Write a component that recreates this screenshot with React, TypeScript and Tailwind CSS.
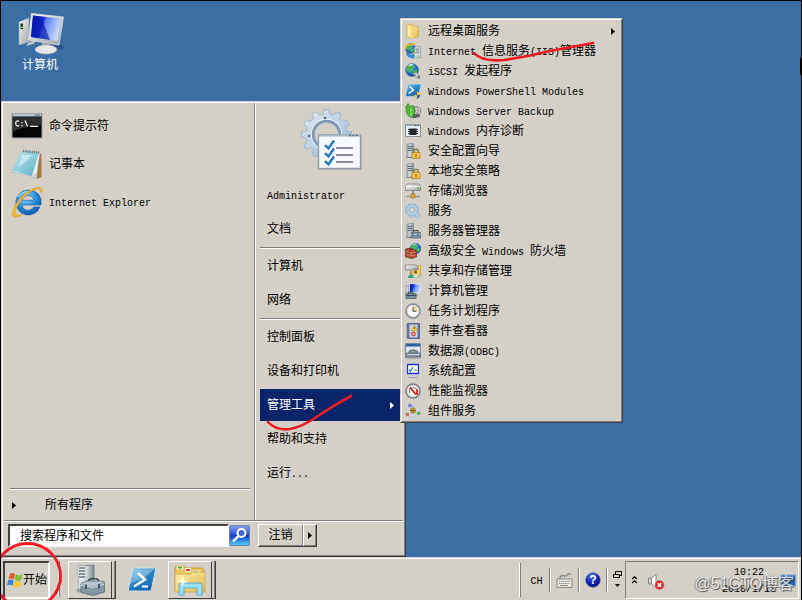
import React from "react";
import type { ReactNode } from "react";

const fontStack = "font-['Liberation_Mono','Noto_Sans_CJK_SC',monospace]";

/* Latin runs are set at half the width of a Han character. */
function Label({ text }: { text: string }) {
  const runs = text.split(/([\x20-\x7e]+)/).filter(Boolean);
  return (
    <span className="inline-block pt-0.5 leading-[14px] whitespace-pre">
      {runs.map((run, i) =>
        /^[\x20-\x7e]/.test(run) ? (
          <span key={i} className="text-[10px]">{run}</span>
        ) : (
          <span key={i}>{run}</span>
        )
      )}
    </span>
  );
}

function Svg({ box = 16, className = "size-4", children }: { box?: number; className?: string; children: ReactNode }) {
  return (
    <svg viewBox={`0 0 ${box} ${box}`} className={`shrink-0 ${className}`} aria-hidden="true">
      {children}
    </svg>
  );
}

function Arrow({ className = "" }: { className?: string }) {
  return (
    <svg viewBox="0 0 4 7" className={`h-[7px] w-1 shrink-0 ${className}`} aria-hidden="true">
      <path d="M0 0L4 3.5L0 7Z" fill="currentColor" />
    </svg>
  );
}

function Gradients() {
  return (
    <svg className="absolute size-0" aria-hidden="true">
      <defs>
        <linearGradient id="screen" x1="0" y1="0" x2="1" y2="0.3">
          <stop offset="0" stopColor="#0512a8" />
          <stop offset="0.45" stopColor="#1a35dc" />
          <stop offset="0.5" stopColor="#5c7df0" />
          <stop offset="1" stopColor="#c6d8fb" />
        </linearGradient>
        <linearGradient id="silver" x1="0" y1="0" x2="1" y2="1">
          <stop offset="0" stopColor="#fafafa" />
          <stop offset="1" stopColor="#9da3a8" />
        </linearGradient>
        <linearGradient id="gear" gradientUnits="userSpaceOnUse" x1="8" y1="6" x2="44" y2="52">
          <stop offset="0" stopColor="#dbe6ef" />
          <stop offset="0.5" stopColor="#bdd0e2" />
          <stop offset="1" stopColor="#8fabc8" />
        </linearGradient>
        <linearGradient id="steel" x1="0" y1="0" x2="1" y2="0">
          <stop offset="0" stopColor="#a9b4bb" />
          <stop offset="0.5" stopColor="#d5dbde" />
          <stop offset="1" stopColor="#7e8a92" />
        </linearGradient>
        <linearGradient id="folder" x1="0" y1="0" x2="1" y2="1">
          <stop offset="0" stopColor="#fdf3b0" />
          <stop offset="1" stopColor="#dfb94a" />
        </linearGradient>
        <linearGradient id="shell" x1="0" y1="0" x2="0.6" y2="1">
          <stop offset="0" stopColor="#8ec9ee" />
          <stop offset="0.5" stopColor="#2f87c8" />
          <stop offset="1" stopColor="#1566ad" />
        </linearGradient>
        <linearGradient id="note" x1="0" y1="0" x2="1" y2="1">
          <stop offset="0" stopColor="#c8eaf0" />
          <stop offset="1" stopColor="#57b0c4" />
        </linearGradient>
        <linearGradient id="search" x1="0" y1="0" x2="0" y2="1">
          <stop offset="0" stopColor="#8da0ef" />
          <stop offset="0.45" stopColor="#2c4fdc" />
          <stop offset="0.5" stopColor="#1237cf" />
          <stop offset="1" stopColor="#4dd5f4" />
        </linearGradient>
        <radialGradient id="globe" cx="0.35" cy="0.3" r="0.8">
          <stop offset="0" stopColor="#9be0ff" />
          <stop offset="0.5" stopColor="#2b7ed2" />
          <stop offset="1" stopColor="#0b3a8c" />
        </radialGradient>
        <radialGradient id="ie" cx="0.4" cy="0.3" r="0.8">
          <stop offset="0" stopColor="#8ad6fb" />
          <stop offset="0.55" stopColor="#2387d4" />
          <stop offset="1" stopColor="#0b4a9e" />
        </radialGradient>
        <radialGradient id="help" cx="0.4" cy="0.25" r="0.8">
          <stop offset="0" stopColor="#5d80f5" />
          <stop offset="0.5" stopColor="#1428c8" />
          <stop offset="1" stopColor="#040c6c" />
        </radialGradient>
      </defs>
    </svg>
  );
}

/* ---------- shared drawing parts ---------- */

function Tower() {
  return (
    <g>
      <path d="M2 1L8.5 0.5V14L2 14.5Z" fill="url(#steel)" stroke="#6d7880" strokeWidth=".6" />
      <path d="M3 3.5H7.5M3 5.5H7.5M3 7.5H7.5" stroke="#46525c" strokeWidth=".8" />
      <path d="M1 14.5H9" stroke="#7d8992" />
    </g>
  );
}

function SmallGlobe({ cx, cy, r }: { cx: number; cy: number; r: number }) {
  return (
    <g transform={`translate(${cx} ${cy}) scale(${r / 6})`}>
      <circle r="6" fill="url(#globe)" stroke="#174f94" strokeWidth=".6" />
      <path d="M-4.5 -3Q-2 -6 1 -5L2 -2L-1 0L-2 3L-4.5 1ZM1 1L5 -1L5 2L2 5L0 4Z" fill="#4db648" />
      <path d="M-3 -4Q-1 -5.5 1 -5" stroke="#d7f7ff" fill="none" />
    </g>
  );
}

function Toolbox() {
  return (
    <g>
      <path d="M9 9V7.5H13V9" fill="none" stroke="#3e4c57" strokeWidth="1" />
      <path d="M6 9.5H15.5V15H6Z" fill="#8298a9" stroke="#4d6170" strokeWidth=".7" />
      <path d="M6 11.5H15.5" stroke="#c8d3da" strokeWidth=".8" />
      <path d="M8 11V13M13 11V13" stroke="#39444d" />
    </g>
  );
}

function Drive() {
  return (
    <g>
      <path d="M2 1H14L15.5 3.5V7.5H0.5V3.5Z" fill="url(#silver)" stroke="#777" strokeWidth=".7" />
      <path d="M.5 3.8H15.5" stroke="#fff" strokeWidth=".7" />
      <path d="M12 5H14" stroke="#53b434" strokeWidth="1.6" />
    </g>
  );
}

/* One closed outline with flat-topped teeth and a round hole. */
function gearPath(cx: number, cy: number, outer: number, inner: number, hole: number, teeth: number) {
  const step = (Math.PI * 2) / teeth;
  const point = (radius: number, angle: number) =>
    `${(cx + radius * Math.sin(angle)).toFixed(2)} ${(cy - radius * Math.cos(angle)).toFixed(2)}`;
  const corners = Array.from({ length: teeth }, (_, i) => {
    const a = i * step;
    return [
      point(inner, a - step * 0.32),
      point(outer, a - step * 0.2),
      point(outer, a + step * 0.2),
      point(inner, a + step * 0.32),
    ].join("L");
  });
  return `M${corners.join("L")}ZM${cx - hole} ${cy}a${hole} ${hole} 0 1 0 ${hole * 2} 0a${hole} ${hole} 0 1 0 ${-hole * 2} 0Z`;
}

/* ---------- administrative tool icons ---------- */

const folderIcon = (
  <Svg>
    <path d="M1.5 2L6 1V14L1.5 15Z" fill="#f0d877" stroke="#c9a53c" strokeWidth=".5" />
    <path d="M6 1.5L8 1V3L13.5 3.5V14L6 14.5Z" fill="url(#folder)" stroke="#c9a53c" strokeWidth=".5" />
    <path d="M2 1L8.5 3.5V15.5L2 14Z" fill="#f5dd85" stroke="#d8b855" strokeWidth=".5" />
    <path d="M4 3.500V13" stroke="#fffbe0" />
  </Svg>
);
const iisIcon = (
  <Svg>
    <SmallGlobe cx={5.5} cy={5.5} r={5} />
    <path d="M.5 6Q1 1 5 1.500Q8 2 10 .5" fill="none" stroke="#f4b02f" strokeWidth="1.8" />
    <path d="M1.500 10Q2 15 7.500 14.500V16L10 13L7.500 10.500V12Q4 12.500 4 9.500Z" fill="#2f8fe0" stroke="#1b61ad" strokeWidth=".4" />
    <path d="M9.5 4L15.5 3.5V14.5L9.5 15Z" fill="#dce2e4" stroke="#7e8b90" strokeWidth=".6" />
    <path d="M10.5 6H14.5M10.5 8H14.5M10.5 10H14.5" stroke="#5d6c73" strokeWidth=".8" />
    <path d="M12 13H14" stroke="#41a83d" />
  </Svg>
);
const iscsiIcon = (
  <Svg>
    <SmallGlobe cx={7} cy={7} r={6.3} />
    <path d="M8.500 10.500L11 9L15 13L14.500 15.500L12 14.500Z" fill="#c4cbd1" stroke="#6b747c" strokeWidth=".7" />
    <circle cx="13.5" cy="14" r="1" fill="#5e666d" />
  </Svg>
);
const shellModulesIcon = (
  <Svg>
    <path d="M3 1H16L13.5 13.500H0.5Z" fill="url(#shell)" stroke="#b9dcf0" strokeWidth=".7" />
    <path d="M4.5 3.5L8.5 7L3.5 10.5" fill="none" stroke="#fff" strokeWidth="1.4" />
    <path d="M12 8.5Q13.5 10 15.5 9.5Q16 14 12 16Q8.5 14 8.8 9.5Q11 10 12 8.5Z" fill="#f2c531" />
    <path d="M12 8.5Q10.5 10 8.8 9.5L8.8 12H12ZM12 12H15.5Q14.5 15 12 16Z" fill="#2663c4" />
  </Svg>
);
const backupIcon = (
  <Svg>
    <circle cx="11.5" cy="8" r="4.200" fill="#c9cdcf" stroke="#737a7e" />
    <circle cx="11.8" cy="8" r="1.400" fill="#eee" stroke="#b06061" strokeWidth=".8" />
    <path d="M6 12L13 10.5L15 12V14L8 15.5Z" fill="#5b6367" />
    <path d="M.5 5L3 .5L6 4L4.500 4.500L5.500 10L7.500 2L9.500 4V11L6.500 14.500L3.500 13L1 8.500L2 5Z" fill="#49c12e" stroke="#247814" strokeWidth=".7" />
    <path d="M6 6V13" stroke="#d8f5c9" strokeWidth=".8" />
  </Svg>
);
const memoryIcon = (
  <Svg>
    <path d="M.5 1.500H15.5V13.5H.5Z" fill="#e9edf0" stroke="#8a949c" />
    <path d="M1 2.5H15" stroke="#a4b6c4" strokeWidth="1.4" />
    <path d="M10 2.5H14" stroke="#4e5c66" strokeDasharray="1 .6" />
    <path d="M4.500 5.500H11.500V12H4.500Z" fill="#22262a" />
    <path d="M3 6.500H13M3 8.500H13M3 10.500H13" stroke="#22262a" strokeWidth=".9" />
  </Svg>
);
const securityIcon = (
  <Svg>
    <Tower />
    <path d="M9 10V8Q9 6.3 11 6.3Q13 6.3 13 8V10" fill="none" stroke="#8f7b45" strokeWidth="1.4" />
    <path d="M7 9.5H15V15.5H7Z" fill="#edb83a" stroke="#a5741a" strokeWidth=".6" />
    <path d="M7.5 11H14.5M7.5 13H14.5" stroke="#ffdf80" strokeWidth=".7" />
    <path d="M11 11V14" stroke="#825710" />
  </Svg>
);
const storageIcon = (
  <Svg>
    <Drive />
    <path d="M8 8V12" stroke="#777" strokeWidth="1.4" />
    <path d="M1 13.5H15" stroke="#8d9499" strokeWidth="1.3" />
    <path d="M6 11H10V15H6Z" fill="#e2a92b" stroke="#9a6f14" strokeWidth=".6" />
  </Svg>
);
const servicesIcon = (
  <Svg>
    <path d={gearPath(7, 7, 6.8, 5.3, 2.8, 12)} fill="#b3d0e6" stroke="#7ba1c2" strokeWidth=".6" fillRule="evenodd" />
    <path d={gearPath(12.7, 12.7, 3, 2.1, 0.9, 8)} fill="#d3e1ec" stroke="#86a3b7" strokeWidth=".5" fillRule="evenodd" />
  </Svg>
);
const serverManagerIcon = (
  <Svg>
    <Tower />
    <Toolbox />
  </Svg>
);
const firewallIcon = (
  <Svg>
    <SmallGlobe cx={10.5} cy={5.5} r={5.2} />
    <path d="M.5 6L5 5L11.5 7.5V14L7 15.5L.5 14Z" fill="#a33a22" stroke="#652113" strokeWidth=".6" />
    <path d="M.5 8.5L7 10L11.5 9M.5 11L7 12.7L11.5 11.5M3 6V9M5.5 9.5V12M3 11.8V14.5M9 7V9.5M9.5 11.8V14.5M7 7V15" stroke="#e2a18b" strokeWidth=".6" fill="none" />
  </Svg>
);
const sharingIcon = (
  <Svg>
    <path d="M6 2.500H15.5V13H6Z" fill="#f1d06c" stroke="#bb922f" strokeWidth=".6" />
    <path d="M.5 2H11L13 4V7H.5Z" fill="url(#silver)" stroke="#777" strokeWidth=".7" />
    <path d="M10 5.500H12" stroke="#45a933" />
    <circle cx="6" cy="9.500" r="1.600" fill="#cf9062" />
    <circle cx="10.5" cy="9" r="1.600" fill="#8c5a3a" />
    <path d="M3 15Q3.5 11.200 6 11.200Q8 11.200 8.5 15Z" fill="#37a18a" />
    <path d="M8.5 14.5Q9 10.800 11 10.800Q13.5 11 13.5 14.5Z" fill="#e3efe8" stroke="#739184" strokeWidth=".5" />
  </Svg>
);
const computerManagementIcon = (
  <Svg>
    <path d="M4.5 .5L15.5 1.2V9.5L4.5 10Z" fill="url(#screen)" stroke="#d9dee5" />
    <path d="M1 3L4 2.5V10L1 10.5Z" fill="#d1d6da" stroke="#7b848b" strokeWidth=".6" />
    <path d="M8 10V12H13" stroke="#a3a9ad" strokeWidth="1.4" fill="none" />
    <path d="M1 10.5H11V15.5H1Z" fill="#7f95a5" stroke="#44545f" strokeWidth=".7" />
    <path d="M3.5 10.5V9H8V10.5M1 12.5H11M3.5 11.8V13.5M8 11.8V13.5" stroke="#2e3c46" strokeWidth=".8" fill="none" />
  </Svg>
);
const taskSchedulerIcon = (
  <Svg>
    <circle cx="8" cy="8" r="7" fill="#f8f9f8" stroke="#858a8d" strokeWidth="1.5" />
    <circle cx="8" cy="8" r="5.6" fill="none" stroke="#c4cbd0" strokeWidth=".6" />
    <path d="M8 8V2.7A5.3 5.3 0 0 1 13.2 8Z" fill="#f6d58b" />
    <path d="M8 3.7V8.3H11.5" fill="none" stroke="#455664" strokeWidth="1" />
  </Svg>
);
const eventViewerIcon = (
  <Svg>
    <path d="M2.5 .5H14.5V15.500H2.5Z" fill="#6377a7" stroke="#42527b" strokeWidth=".7" />
    <path d="M4.500 1.5H12.5V14.500H4.500Z" fill="#c9d4ec" />
    <path d="M1 2.5H4M1 4.7H4M1 7H4M1 9.3H4M1 11.5H4M1 13.5H4" stroke="#777f8c" strokeWidth=".8" />
    <path d="M9.500 2L12.500 7.5H6.500Z" fill="#f8d32b" stroke="#a8891a" strokeWidth=".5" />
    <path d="M9.500 4V6" stroke="#333" strokeWidth=".8" />
    <circle cx="8.5" cy="11" r="2.400" fill="#d94640" />
    <path d="M7.5 10L9.5 12M9.5 10L7.5 12" stroke="#fff" strokeWidth=".7" />
  </Svg>
);
const odbcIcon = (
  <Svg>
    <path d="M.5 .5H15.5V15H.5Z" fill="#dfe5ea" stroke="#788ea6" />
    <path d="M1 2.2H15" stroke="#315f9c" strokeWidth="2.6" />
    <path d="M4 8Q8 5.5 12.5 8V13H4Z" fill="#89979f" stroke="#4f5c64" strokeWidth=".7" />
    <path d="M1.5 10H15V14H1.5Z" fill="#8b9aa3" stroke="#4b5962" strokeWidth=".7" />
    <path d="M2 11.5H14.5" stroke="#e4eaed" strokeWidth=".8" />
  </Svg>
);
const systemConfigIcon = (
  <Svg>
    <path d="M1 .5H15V11.500H1Z" fill="#dfe4ea" />
    <path d="M2.500 1.500H13.500V10.500H2.500Z" fill="#fff" stroke="#1c31cb" strokeWidth="1.300" />
    <path d="M4 6.500L5.500 8.500L8 4" fill="none" stroke="#3487bd" strokeWidth="1.300" />
    <path d="M9 7H12" stroke="#79818c" />
    <path d="M6 12H10L11 14H5Z" fill="#cdd2d6" />
    <path d="M3.5 14.5H12.5" stroke="#9ea4a9" />
  </Svg>
);
const performanceIcon = (
  <Svg>
    <circle cx="8" cy="8" r="7" fill="#fbfbfa" stroke="#777c7e" strokeWidth="1.5" />
    <circle cx="8" cy="8" r="5.5" fill="none" stroke="#b8bcbd" strokeWidth=".6" />
    <path d="M4.5 10V6L8 4.500L12 6V10" fill="none" stroke="#55606a" strokeWidth=".8" />
    <path d="M5 4.500L8 8L10.500 11H12V6.500" fill="none" stroke="#e4140e" strokeWidth="1.700" />
  </Svg>
);
const componentIcon = (
  <Svg>
    <ellipse cx="8" cy="8.500" rx="7" ry="6" fill="#d0d4de" stroke="#b0b6c4" strokeWidth=".6" />
    <circle cx="5" cy="2.500" r="2" fill="#8188d7" />
    <circle cx="2.500" cy="11.500" r="1.800" fill="#dc6e69" />
    <circle cx="13.6" cy="10.3" r="1.8" fill="#61ae53" />
    <circle cx="8" cy="7.5" r="2.7" fill="#edb92f" stroke="#8f6712" strokeWidth=".8" />
    <path d="M8 5.2V9.8M5.7 7.5H10.3" stroke="#61480f" strokeWidth=".8" />
  </Svg>
);

/* ---------- larger icons ---------- */

const computerIcon = (
  <Svg box={48} className="size-12">
    <ellipse cx="34" cy="38" rx="14" ry="4" fill="#1f4778" opacity=".5" />
    <path d="M3 13L13 9V33L3 36Z" fill="url(#silver)" stroke="#a4abb1" strokeWidth=".7" />
    <path d="M13 33L20 31L18 35L10 37Z" fill="#b9c0c5" />
    <path d="M4.5 14.5H7V20H4.5Z" fill="#262a2d" />
    <path d="M5 17.5H7V19H5Z" fill="#56ef31" />
    <path d="M15.500 4.500L47.500 8L43 36L12.500 31Z" fill="url(#silver)" stroke="#e6e9eb" strokeWidth=".7" />
    <path d="M17 6.500L45 9.500L41.500 32L15 28Z" fill="url(#screen)" />
    <path d="M17 6.500L25 7.400L34 31L15 28Z" fill="#0617a6" opacity=".65" />
    <path d="M26 34L34 35L35 39H25Z" fill="#a9afb4" />
    <ellipse cx="30" cy="40.500" rx="11" ry="4.500" fill="#e3e5e6" stroke="#a3a8ab" strokeWidth=".7" />
  </Svg>
);

const commandIcon = (
  <Svg box={32} className="size-8">
    <path d="M1 3.5H31V28H1Z" fill="#050505" stroke="#9da3a8" />
    <path d="M1.5 4H30.5V6.5H1.5Z" fill="#b7c2cb" />
    <path d="M24 5.2H29" stroke="#44505a" strokeDasharray="1.4 .7" />
    <path d="M1.5 7H30.5V15Q13 16 1.5 22Z" fill="#4a4a4a" opacity=".6" />
    <path d="M8 11.5Q7 10.7 6 11Q4.7 11.4 4.7 13.3Q4.7 15.6 6 16Q7 16.2 8 15.3M11 12V13.3M11 15V16.3M14 10.5L16.5 16.5M19 16.3H27" stroke="#fff" strokeWidth="1.2" fill="none" />
  </Svg>
);

const notepadIcon = (
  <Svg box={32} className="size-8">
    <path d="M27 4L30.500 6V29L26 31Z" fill="#a9783e" />
    <path d="M11 3L29 5L25 31L20 28L1 24Z" fill="#e5eef0" stroke="#91a7ad" strokeWidth=".6" />
    <path d="M11 3L28 4.5L21 28L1 22.500Z" fill="url(#note)" />
    <path d="M21 28L25 25L25 31Z" fill="#c9d3d6" />
    <path d="M12 3L28 4.500" stroke="#717b7f" strokeWidth="2.400" strokeDasharray="1.200 1" />
    <path d="M11 7L7 20Q15 13 22 7Z" fill="#e6f8fb" opacity=".55" />
  </Svg>
);

const explorerIcon = (
  <Svg box={32} className="size-8">
    <path
      d="M17 4A12.5 12.5 0 1 0 29 21H22.5Q20.5 24.3 17 24.3Q11.5 24 11.2 19H30Q31.5 5 17 4ZM11.3 14.3Q12.3 9.6 17.3 9.6Q22.2 9.8 22.7 14.3Z"
      fill="url(#ie)"
      stroke="#1257a5"
      strokeWidth=".6"
      fillRule="evenodd"
    />
    <path d="M7 11Q10 6 17 5.5" fill="none" stroke="#bfeaff" strokeWidth="1.2" opacity=".8" />
    <path d="M31.5 5.5Q31-.5 24 2Q12 6.500 5 18Q-1.500 29 3 31Q6 32 12 28Q6 30 4.500 28Q3 25 9 16Q17 5.500 26 3Q30 2 30 6.500Z" fill="#f2b92c" stroke="#c98b13" strokeWidth=".4" />
  </Svg>
);

const adminToolsIcon = (
  <Svg box={64} className="size-16">
    <path d={gearPath(26.5, 27.5, 25, 20.5, 12, 12)} fill="url(#gear)" stroke="#98adc0" strokeWidth=".8" strokeLinejoin="round" fillRule="evenodd" />
    <circle cx="26.500" cy="27.500" r="13.500" fill="none" stroke="#7f97b2" strokeWidth="2.500" />
    <circle cx="26.500" cy="27.500" r="15.500" fill="none" stroke="#e9f1f7" strokeWidth="1" />
    <circle cx="25" cy="11" r="1.300" fill="#62717e" />
    <circle cx="9" cy="29" r="1.300" fill="#62717e" />
    <path d="M19 29H62V63H19Z" fill="#878c94" opacity=".5" />
    <path d="M18.500 28H60.500V61.500H18.500Z" fill="#f8f9fc" stroke="#939ca7" strokeWidth="1.400" />
    <path d="M19 28.500H60" stroke="#aab8c6" strokeWidth="2" />
    <path d="M49 28.500H59" stroke="#5f6f7e" strokeWidth="1.400" strokeDasharray="2 1.500" />
    <path d="M36 41H53M36 48H53M36 55H53" stroke="#91889f" strokeWidth="1.800" />
    <path d="M25 38L28.500 41.500L34 33.500M25 46L28.500 49.500L34 41.500M25 54L28.500 57.500L34 49.500" stroke="#2179bb" strokeWidth="2.400" fill="none" />
  </Svg>
);

const serverTaskIcon = (
  <Svg box={32} className="size-8">
    <path d="M4 2L20 1V27L5 29Z" fill="url(#steel)" stroke="#66727b" strokeWidth=".7" />
    <path d="M4 2L11 1.700V28L5 29Z" fill="#e4e8ea" />
    <path d="M5 4H11M5 7H11M5 10H11M5 13H11" stroke="#67747d" strokeWidth="1.300" />
    <path d="M2 25L10 24V28L3 28.500Z" fill="#9ba5ab" />
    <path d="M14 18Q14 14.500 19.500 14.500Q25 14.500 25 18" fill="none" stroke="#3c4a55" strokeWidth="1.600" />
    <path d="M7 19.500L12 17H26L30.500 18V28L19 31.500L7 28.500Z" fill="#8497a5" stroke="#566874" strokeWidth=".8" />
    <path d="M7.500 20L12 17.500H26L30 18.500L19 22.500Z" fill="#b8c5ce" />
    <path d="M7 21L19 23.500L30.500 20" fill="none" stroke="#d4dee4" strokeWidth="1" />
    <path d="M12 20.500V25M25 20V24.500" stroke="#35424c" strokeWidth="1.600" />
  </Svg>
);

const shellTaskIcon = (
  <Svg box={32} className="size-8">
    <path d="M8 4H28.500Q30 4 29.600 6L25.500 25Q25 27 23.400 27H4Q2 27 2.500 25L6.500 6Q6.800 4 8 4Z" fill="url(#shell)" stroke="#d0e9f5" strokeWidth=".9" />
    <path d="M7 6L28 5L18 14Q8 18 4 20Z" fill="#d6f0fc" opacity=".35" />
    <path d="M12 9L19 15.500L8 22.500" fill="none" stroke="#fff" strokeWidth="2.500" />
    <path d="M16 22.500H22" stroke="#fff" strokeWidth="2" />
  </Svg>
);

const libraryTaskIcon = (
  <Svg box={32} className="size-8">
    <path d="M1 4Q1 2 3 2H10L12 4H27Q30 4 30 7V27H1Z" fill="#eac958" stroke="#ba9030" strokeWidth=".8" />
    <path d="M3 3.500H9M11 6H17M19 8.500H26" stroke="#fff" strokeWidth="3.500" />
    <path d="M4 3.500H8" stroke="#37ae35" strokeWidth="2" />
    <path d="M12 6H16" stroke="#db4031" strokeWidth="2" />
    <path d="M20 8.500H24" stroke="#3e9bd8" strokeWidth="2" />
    <path d="M1 10H17L19 8H31V28H1Z" fill="url(#folder)" stroke="#c8a342" strokeWidth=".7" />
    <path d="M5 31V21Q5 19 8 19H25Q28 19 28 21V31H23V24H10V31Z" fill="#9bddf4" stroke="#4ba6ce" strokeWidth=".8" />
    <path d="M9 12L10 16L14 18L10 19L8 23L7 19L4 17L7 16Z" fill="#fff" opacity=".8" />
  </Svg>
);

const windowsFlag = (
  <Svg box={16} className="size-4">
    <path d="M3 1.500Q5.500 .3 8 1.800L6.900 7.300Q4.300 5.800 1.500 7.200Z" fill="#e8572a" />
    <path d="M8.800 2.500Q12 4.300 15.500 2.600L14.200 8Q11 9.500 7.700 7.800Z" fill="#7fbd37" />
    <path d="M1.300 8Q4 6.700 6.700 8.200L5.500 13.500Q2.800 12 0 13.300Z" fill="#3b82d8" />
    <path d="M7.500 8.700Q10.700 10.300 14 8.900L12.700 14.500Q9.500 15.900 6.300 14.200Z" fill="#f8c72b" />
  </Svg>
);

/* ---------- menus ---------- */

const tools: { name: string; icon: ReactNode; submenu?: boolean }[] = [
  { name: "远程桌面服务", icon: folderIcon, submenu: true },
  { name: "Internet 信息服务(IIS)管理器", icon: iisIcon },
  { name: "iSCSI 发起程序", icon: iscsiIcon },
  { name: "Windows PowerShell Modules", icon: shellModulesIcon },
  { name: "Windows Server Backup", icon: backupIcon },
  { name: "Windows 内存诊断", icon: memoryIcon },
  { name: "安全配置向导", icon: securityIcon },
  { name: "本地安全策略", icon: securityIcon },
  { name: "存储浏览器", icon: storageIcon },
  { name: "服务", icon: servicesIcon },
  { name: "服务器管理器", icon: serverManagerIcon },
  { name: "高级安全 Windows 防火墙", icon: firewallIcon },
  { name: "共享和存储管理", icon: sharingIcon },
  { name: "计算机管理", icon: computerManagementIcon },
  { name: "任务计划程序", icon: taskSchedulerIcon },
  { name: "事件查看器", icon: eventViewerIcon },
  { name: "数据源(ODBC)", icon: odbcIcon },
  { name: "系统配置", icon: systemConfigIcon },
  { name: "性能监视器", icon: performanceIcon },
  { name: "组件服务", icon: componentIcon },
];

const pinned = [
  { name: "命令提示符", icon: commandIcon },
  { name: "记事本", icon: notepadIcon },
  { name: "Internet Explorer", icon: explorerIcon },
];

const placeGroups = [
  ["Administrator", "文档"],
  ["计算机", "网络"],
  ["控制面板", "设备和打印机", "管理工具", "帮助和支持", "运行..."],
];

const raised = "border border-t-white border-l-white border-r-[#404040] border-b-[#404040]";

function Rule() {
  return <div className="h-[2px] border-t border-b border-t-[#808080] border-b-white" />;
}

function ToolsMenu() {
  return (
    <div className="absolute top-[17px] left-[399px] w-[223px] border border-t-[#d4d0c8] border-r-[#404040] border-b-[#404040] border-l-[#d4d0c8] bg-[#d4d0c8]">
      <div role="menu" className="border border-t-white border-r-[#808080] border-b-[#808080] border-l-white pt-px">
        {tools.map((tool) => (
          <button key={tool.name} type="button" role="menuitem" className="flex h-5 w-full items-center gap-[7px] pr-1.5 pl-[3px] text-left">
            {tool.icon}
            <Label text={tool.name} />
            {tool.submenu && <Arrow className="ml-auto" />}
          </button>
        ))}
      </div>
    </div>
  );
}

function StartMenu() {
  return (
    <div className="w-[405px] border border-t-[#d4d0c8] border-r-[#404040] border-b-[#404040] border-l-[#d4d0c8] bg-[#d4d0c8]">
      <div className="border border-t-white border-r-[#808080] border-b-[#808080] border-l-white px-px">
        <div className="flex">
          <div className="flex w-[250px] flex-col pt-1 pr-1 pl-1.5">
            {pinned.map((item) => (
              <button key={item.name} type="button" className="flex h-[38px] items-center gap-1.5 pl-px text-left">
                {item.icon}
                <Label text={item.name} />
              </button>
            ))}
            <div className="mt-auto">
              <Rule />
              <button type="button" className="flex h-[30px] w-full items-center gap-[29px] pl-0.5 text-left">
                <Arrow />
                <Label text="所有程序" />
              </button>
            </div>
          </div>
          <div className="w-[2px] border-r border-l border-r-white border-l-[#808080]" />
          <div className="flex flex-1 flex-col pr-[3px] pb-[30px] pl-1">
            <div className="ml-10 flex h-[75px] items-start pt-1">{adminToolsIcon}</div>
            {placeGroups.map((group, i) => (
              <React.Fragment key={i}>
                {i > 0 && (
                  <div className="mt-px">
                    <Rule />
                  </div>
                )}
                {group.map((name) => (
                  <button
                    key={name}
                    type="button"
                    className={`my-px flex h-8 items-center justify-between pr-1.5 pl-[7px] text-left ${
                      name === "管理工具" ? "bg-[#0a246a] text-white" : ""
                    }`}
                  >
                    <Label text={name} />
                    {name === "管理工具" && <Arrow />}
                  </button>
                ))}
              </React.Fragment>
            ))}
          </div>
        </div>
        <Rule />
        <div className="flex h-[33px] items-start pt-0.5 pl-1">
          <input
            type="text"
            aria-label="搜索程序和文件"
            defaultValue="搜索程序和文件"
            className="h-[23px] w-[221px] border-2 border-t-[#404040] border-r-white border-b-white border-l-[#404040] bg-white pb-0.5 pl-2.5 text-[12px] leading-4 outline-none"
          />
          <button type="button" aria-label="搜索" className="mt-px size-[21px]">
            <Svg box={21} className="size-[21px]">
              <rect x=".5" y=".5" width="20" height="20" rx="1.500" fill="url(#search)" stroke="#7182a6" />
              <circle cx="12.500" cy="8" r="4" fill="#4868df" stroke="#fff" strokeWidth="2" />
              <path d="M9.500 11L4 16.500" stroke="#fff" strokeWidth="2.400" />
            </Svg>
          </button>
          <div className={`ml-2 flex h-[23px] ${raised}`}>
            <button type="button" className="w-11 border-r border-b border-r-[#808080] border-b-[#808080]">
              <Label text="注销" />
            </button>
            <button type="button" aria-label="更多选项" className="flex w-[13px] items-center justify-center border-r border-b border-l border-r-[#808080] border-b-[#808080] border-l-white">
              <Arrow />
            </button>
          </div>
        </div>
      </div>
    </div>
  );
}

/* ---------- taskbar ---------- */

function TraySeparator() {
  return <div className="h-6 w-[2px] shrink-0 border-r border-l border-r-white border-l-[#808080]" />;
}

function TaskButton({ label, children }: { label: string; children: ReactNode }) {
  return (
    <div className="flex h-[38px] border-r border-r-[#404040]">
      <button type="button" aria-label={label} className={`flex w-11 items-center justify-center ${raised}`}>
        {children}
      </button>
      <div className="w-[3px] border-r border-b border-r-[#808080] border-b-[#404040]" />
    </div>
  );
}

function Taskbar() {
  return (
    <div className="flex h-[43px] shrink-0 border-t border-t-[#d4d0c8] bg-[#d4d0c8]">
      <div className="flex flex-1 items-start border-t border-t-white pt-0.5 pr-0.5 pl-0.5">
        <button
          type="button"
          className="flex h-[38px] w-[47px] items-center border-2 border-t-[#404040] border-r-white border-b-white border-l-[#404040] pl-0.5 whitespace-nowrap"
        >
          {windowsFlag}
          <Label text="开始" />
        </button>
        <div className="ml-2 h-9 w-[2px] border-r border-l border-r-[#808080] border-l-white" />
        <div className="ml-2 flex">
          <TaskButton label="服务器管理器">{serverTaskIcon}</TaskButton>
        </div>
        <button type="button" aria-label="Windows PowerShell" className="flex h-[38px] w-[52px] items-center justify-center">
          {shellTaskIcon}
        </button>
        <TaskButton label="Windows 资源管理器">{libraryTaskIcon}</TaskButton>

        <div className="ml-auto flex h-[38px] items-center">
          <div className="h-[34px] w-[2px] border-r border-l border-r-[#808080] border-l-white" />
          <button type="button" className="mr-1.5 ml-[9px] w-[13px]">
            <Label text="CH" />
          </button>
          <div className="flex items-center gap-[5px]">
            <TraySeparator />
            <button type="button" aria-label="键盘">
              <Svg box={17} className="size-[17px]">
                <path d="M1 7H16V15.500H1Z" fill="#e9e8e3" stroke="#8a8a86" />
                <path d="M3 9.500H14M3 11.500H14" stroke="#85857f" strokeDasharray="1.300 .8" />
                <path d="M4 13.500H12" stroke="#85857f" />
                <path d="M4 6.500Q4 3.500 7 3.500Q9 5 11 3Q12.500 1 15 2" fill="none" stroke="#8a8a86" strokeWidth="1.500" />
              </Svg>
            </button>
            <TraySeparator />
            <button type="button" aria-label="帮助">
              <Svg>
                <circle cx="8" cy="8" r="7.300" fill="url(#help)" stroke="#626e9c" strokeWidth=".8" />
                <text x="8" y="12" textAnchor="middle" fontSize="12" fontWeight="bold" fill="#fff">?</text>
              </Svg>
            </button>
            <TraySeparator />
            <button type="button" aria-label="语言栏选项" className="mr-[3px]">
              <svg viewBox="0 0 9 18" className="h-[18px] w-[9px]" aria-hidden="true">
                <path d="M2.500 3V.5H8.500V4.500H6.500M.5 3.500H6.500V6.500H.5Z" fill="none" stroke="#000" />
                <path d="M2 13H7L4.500 16Z" fill="#000" />
              </svg>
            </button>
          </div>
          <div className="relative flex h-[38px] w-[174px] items-center border border-t-[#808080] border-r-white border-b-white border-l-[#808080] pl-1.5">
            <button type="button" aria-label="显示隐藏的图标">
              <svg viewBox="0 0 5 8" className="h-2 w-[5px]" aria-hidden="true">
                <path d="M0 3L2.500 .8L5 3M0 7L2.500 4.800L5 7" fill="none" stroke="#000" strokeWidth="1.300" />
              </svg>
            </button>
            <button type="button" aria-label="静音" className="mt-1 ml-[11px]">
              <Svg box={17} className="size-[17px]">
                <path d="M.5 4H3.500V10H.5Z" fill="#cbcac7" stroke="#777" strokeWidth=".8" />
                <path d="M3.500 4L8 .5V13.500L3.500 10Z" fill="#fff" stroke="#777" strokeWidth=".8" />
                <circle cx="11.500" cy="11" r="4.700" fill="#df2927" stroke="#b8b0ac" strokeWidth=".5" />
                <path d="M9.700 9.200L13.300 12.800M13.300 9.200L9.700 12.800" stroke="#fff" strokeWidth="1.500" />
              </Svg>
            </button>
            <time className="ml-[57px] flex flex-col items-center leading-4">
              <Label text="10:22" />
              <Label text="2018/1/13" />
            </time>
            <Svg box={16} className="ml-1 size-4">
              <path d="M1 3H15.500V14H1Z" fill="#2563b5" stroke="#7fa8d0" />
              <path d="M1.500 3.500H15L5 13.500H1.500Z" fill="#7fb2ea" opacity=".5" />
            </Svg>
            <div className="absolute right-1 bottom-0.5 font-['Liberation_Sans','Noto_Sans_CJK_SC',sans-serif] text-[16px] leading-6 whitespace-nowrap text-[#eeeeee] opacity-80 [text-shadow:1px_1px_1px_#333,-1px_0_1px_#777]">
              @51CTO博客
            </div>
          </div>
        </div>
      </div>
    </div>
  );
}

/* Red pen strokes drawn over the screen. */
function PenMarks() {
  return (
    <svg viewBox="0 0 802 600" className="pointer-events-none absolute -top-px -left-px h-[600px] w-[802px]" aria-hidden="true">
      <g fill="none" stroke="#ed1c24" strokeWidth="3" strokeLinecap="round">
        <path d="M474 53Q482 62 504 60Q526 57 550 51L593 43" strokeWidth="2.600" />
        <path d="M268 422Q276 431 290 429Q302 427 318 416Q334 405 351 396" strokeWidth="2.600" />
        <ellipse cx="27.500" cy="576" rx="33" ry="32.500" />
      </g>
    </svg>
  );
}

export default function App() {
  return (
    <div className={`relative flex h-screen min-h-[600px] flex-col overflow-hidden border-t border-r border-l border-black bg-[#3a6ea5] text-[12px] leading-4 text-black ${fontStack}`}>
      <Gradients />
      <main className="relative flex flex-1 flex-col items-start justify-end">
        <button type="button" className="absolute top-2 left-[15px] flex w-12 flex-col items-center text-white">
          {computerIcon}
          <Label text="计算机" />
        </button>
        <StartMenu />
        <ToolsMenu />
        <div className="absolute top-[57px] right-0 h-[17px] w-px bg-black" />
      </main>
      <Taskbar />
      <PenMarks />
    </div>
  );
}
